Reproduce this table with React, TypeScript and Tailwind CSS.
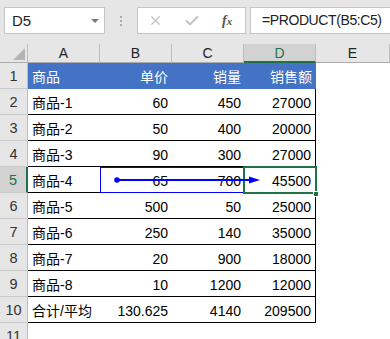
import { X, Check } from 'lucide-react';

const rows = [
  ['商品-1', '60', '450', '27000'],
  ['商品-2', '50', '400', '20000'],
  ['商品-3', '90', '300', '27000'],
  ['商品-4', '65', '700', '45500'],
  ['商品-5', '500', '50', '25000'],
  ['商品-6', '250', '140', '35000'],
  ['商品-7', '20', '900', '18000'],
  ['商品-8', '10', '1200', '12000'],
  ['合计/平均', '130.625', '4140', '209500'],
];

const font = "font-['Liberation_Sans','Noto_Sans_CJK_SC',sans-serif]";

function RowHead({ n, active }: { n: number; active?: boolean }) {
  return (
    <div
      className={`h-[26px] flex items-center justify-center pt-[3px] text-[14.5px] border-b border-[#c9c9c9] ${
        active
          ? 'bg-[#d2d2d2] text-[#217346] border-r-2 border-r-[#217346]'
          : 'bg-[#e6e6e6] text-[#333] border-r border-r-[#bdbdbd]'
      }`}
    >
      {n}
    </div>
  );
}

export default function App() {
  return (
    <div className={`w-[390px] h-[339px] overflow-hidden bg-white ${font}`}>
      {/* Toolbar */}
      <div className="h-[44px] bg-[#e6e6e6] flex items-start pt-[7px] pl-[4px]">
        <div className="w-[101px] h-[27px] bg-white border border-[#c6c6c6] flex items-center pl-[7px] pr-[5px] text-[15px] text-[#222]">
          <span className="flex-1 pt-[1px]">D5</span>
          <span className="w-0 h-0 border-l-[4px] border-r-[4px] border-t-[4px] border-l-transparent border-r-transparent border-t-[#777]" />
        </div>
        <div className="w-[32px] h-[27px] flex flex-col items-center justify-center gap-[2px]">
          <span className="w-[2px] h-[2px] bg-[#aaa]" />
          <span className="w-[2px] h-[2px] bg-[#aaa]" />
          <span className="w-[2px] h-[2px] bg-[#aaa]" />
        </div>
        <div className="w-[109px] h-[27px] bg-white border border-[#c6c6c6] flex items-center">
          <div className="w-[36px] flex justify-center">
            <X className="w-[15px] h-[15px] text-[#c2c2c2]" strokeWidth={2} />
          </div>
          <div className="w-[36px] flex justify-center">
            <Check className="w-[16px] h-[16px] text-[#c2c2c2]" strokeWidth={3} />
          </div>
          <div className="w-[36px] flex justify-center font-['Liberation_Serif',serif] italic text-[14px] text-[#555] font-bold">
            f<span className="text-[11px] pt-[3px]">x</span>
          </div>
        </div>
        <div className="ml-[4px] flex-1 h-[27px] bg-white border border-r-0 border-[#c6c6c6] flex items-center pl-[11px] text-[14px] tracking-[-0.4px] text-[#222]">
          =PRODUCT(B5:C5)
        </div>
      </div>

      {/* Sheet */}
      <div className="relative">
        <div className="grid grid-cols-[28px_72px_72px_72px_72px_1fr] text-[14px] text-black">
          {/* column header */}
          <div className="h-[19px] bg-[#e6e6e6] border-b border-[#ababab] border-r border-r-[#bdbdbd] flex items-end justify-end pr-[2px] pb-[2px]">
            <svg width="12" height="12" viewBox="0 0 12 12">
              <polygon points="12,0 12,12 0,12" fill="#b4b4b4" />
            </svg>
          </div>
          {['A', 'B', 'C', 'D', 'E'].map((c) => (
            <div
              key={c}
              className={`h-[19px] flex items-center justify-center pt-[1px] ${
                c === 'D'
                  ? 'bg-[#d2d2d2] text-[#217346] border-b-2 border-[#217346] border-r border-r-[#bdbdbd]'
                  : 'bg-[#e6e6e6] text-[#222] border-b border-[#ababab] border-r border-r-[#bdbdbd]'
              }`}
            >
              {c}
            </div>
          ))}

          {/* row 1 */}
          <RowHead n={1} />
          <div className="h-[26px] bg-[#4472c4] text-white flex items-center pt-[3px] pl-[4px]">商品</div>
          <div className="h-[26px] bg-[#4472c4] text-white flex items-center justify-end pt-[3px] pr-[4px]">单价</div>
          <div className="h-[26px] bg-[#4472c4] text-white flex items-center justify-end pt-[3px] pr-[3px]">销量</div>
          <div className="h-[26px] bg-[#4472c4] text-white flex items-center justify-end pt-[3px] pr-[4px]">销售额</div>
          <div className="h-[26px]" />

          {rows.map((r, i) => (
            <div key={i} className="contents">
              <RowHead n={i + 2} active={i === 3} />
              <div className="h-[26px] border-b border-black flex items-center pt-[3px] pl-[4px]">{r[0]}</div>
              <div className="h-[26px] border-b border-black flex items-center justify-end pt-[3px] pr-[4px]">{r[1]}</div>
              <div className="h-[26px] border-b border-black flex items-center justify-end pt-[3px] pr-[3px]">{r[2]}</div>
              <div className="h-[26px] border-b border-r border-black flex items-center justify-end pt-[3px] pr-[4px]">{r[3]}</div>
              <div className="h-[26px]" />
            </div>
          ))}

          <RowHead n={11} />
          <div className="h-[26px] col-span-5" />
        </div>

        {/* trace precedents box */}
        <div className="absolute left-[100px] top-[123px] w-[144px] h-[26px] border border-[#0000ff]" />
        {/* selection */}
        <div className="absolute left-[243px] top-[122px] w-[74px] h-[28px] border-2 border-[#217346]" />
        <div className="absolute left-[313px] top-[147px] w-[6px] h-[6px] bg-[#217346] border border-white" />
        {/* arrow */}
        <svg className="absolute left-0 top-0" width="390" height="295">
          <line x1="117" y1="136" x2="252" y2="136" stroke="#0000ff" strokeWidth="2" />
          <circle cx="117" cy="136" r="2.8" fill="#0000ff" />
          <polygon points="249,132.5 260,136 249,139.5" fill="#0000ff" />
        </svg>
      </div>
    </div>
  );
}
